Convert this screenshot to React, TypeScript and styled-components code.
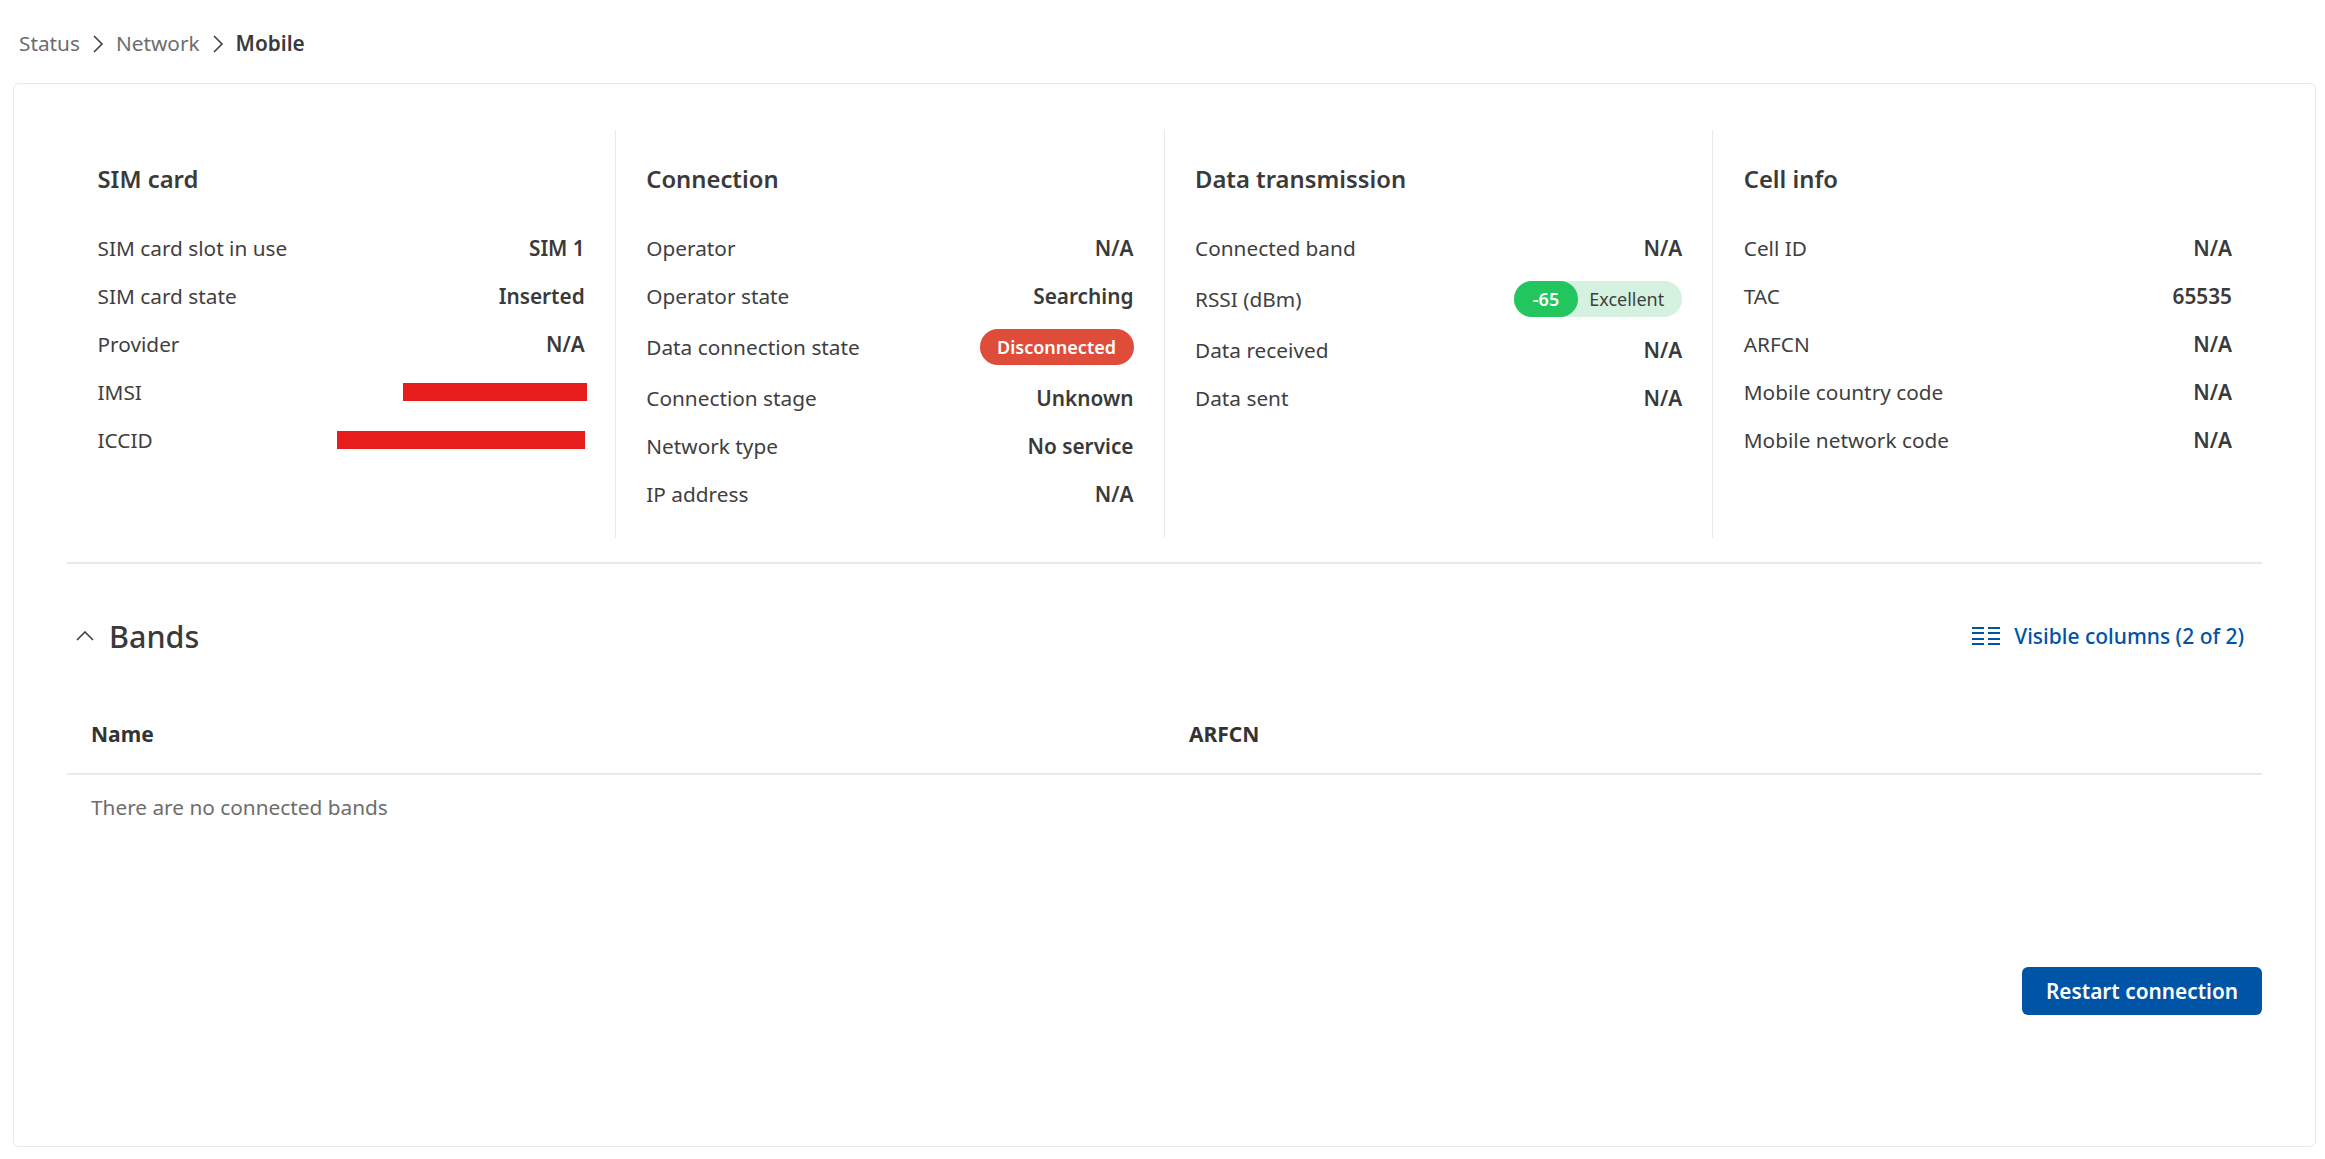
import React from "react";
import styled, { createGlobalStyle } from "styled-components";

const Global = createGlobalStyle`
  html, body { margin: 0; padding: 0; background: #fff; }
  body { font-family: "Noto Sans", "Open Sans", sans-serif; color: #3b3b3b; }
`;

const Page = styled.div`
  width: 2325px;
  height: 1159px;
  box-sizing: border-box;
  padding: 0 9px 12px 13px;
  display: flex;
  flex-direction: column;
  overflow: hidden;
`;

const Crumbs = styled.nav`
  height: 83px;
  box-sizing: border-box;
  padding: 30px 0 0 6px;
  display: flex;
  align-items: flex-start;
  font-size: 20.8px;
  line-height: 27px;
`;

const Crumb = styled.span<{ $current?: boolean }>`
  color: ${(p) => (p.$current ? "#3a3a3a" : "#6d6d6d")};
  font-weight: ${(p) => (p.$current ? 600 : 400)};
`;

const CrumbSep = styled.svg`
  width: 12px;
  height: 18px;
  margin: 5px 12px 0;
  flex: none;
`;

const Card = styled.main`
  flex: 1;
  box-sizing: border-box;
  border: 1px solid #e6e8ea;
  border-radius: 6px;
  padding: 46px 53px 0;
  display: flex;
  flex-direction: column;
`;

const Summary = styled.section`
  display: grid;
  grid-template-columns: repeat(4, 1fr);
  height: 408px;
  margin-bottom: 24px;
`;

const Column = styled.div<{ $last?: boolean }>`
  padding: 34px 30px 0 30.5px;
  border-right: ${(p) => (p.$last ? "none" : "1px solid #e8eaed")};
`;

const ColumnTitle = styled.h3`
  margin: 0 0 30px;
  font-size: 23.8px;
  line-height: 30px;
  font-weight: 600;
  color: #3a3a3a;
`;

const Row = styled.div<{ $tall?: boolean }>`
  display: flex;
  justify-content: space-between;
  align-items: center;
  height: ${(p) => (p.$tall ? 54 : 48)}px;
  font-size: 20.8px;
  line-height: 36px;
`;

const Label = styled.span`
  color: #3f3f3f;
`;

const Value = styled.span`
  font-weight: 600;
  color: #3a3a3a;
`;

const Redaction = styled.span<{ $w: number; $right: number }>`
  display: block;
  width: ${(p) => p.$w}px;
  height: 18px;
  margin-right: ${(p) => p.$right}px;
  background: #e81e1e;
`;

const BadgeDanger = styled.span`
  background: #df4c3a;
  color: #fff;
  font-size: 18px;
  font-weight: 600;
  line-height: 36px;
  height: 36px;
  padding: 0 17.5px;
  border-radius: 18px;
`;

const Signal = styled.span`
  display: flex;
  height: 36px;
  border-radius: 18px;
  background: #d4f2df;
  font-size: 18px;
  line-height: 36px;
  color: #3f3f3f;
`;

const SignalValue = styled.span`
  background: #22c55e;
  color: #fff;
  font-weight: 600;
  border-radius: 18px;
  padding: 0 18.5px;
`;

const SignalText = styled.span`
  padding: 0 18px 0 11.5px;
`;

const Divider = styled.hr`
  margin: 0;
  border: none;
  border-top: 2px solid #e6e9ee;
`;

const BandsHead = styled.div`
  height: 125px;
  box-sizing: border-box;
  padding: 18px 18px 0 9px;
  display: flex;
  align-items: center;
  justify-content: space-between;
`;

const BandsTitle = styled.div`
  display: flex;
  align-items: center;
  gap: 15px;
  font-size: 30.5px;
  font-weight: 500;
  color: #3a3a3a;
`;

const ColumnsToggle = styled.button`
  display: flex;
  align-items: center;
  gap: 14px;
  border: none;
  background: none;
  padding: 0;
  font: 500 21px "Noto Sans", sans-serif;
  color: #0054a6;
`;

const TableHead = styled.div`
  display: grid;
  grid-template-columns: 1098px 1fr;
  height: 86px;
  box-sizing: border-box;
  padding: 6px 24px 0;
  align-items: center;
  border-bottom: 2px solid #e6e9ee;
  font-size: 21px;
  font-weight: 700;
  color: #333;
`;

const Empty = styled.div`
  padding: 19px 24px 18px;
  font-size: 20.8px;
  line-height: 27px;
  color: #6d6d6d;
`;

const Actions = styled.div`
  display: flex;
  justify-content: flex-end;
  margin-top: 128px;
`;

const PrimaryButton = styled.button`
  height: 48px;
  width: 240px;
  border: none;
  border-radius: 6px;
  background: #0054a6;
  color: #fff;
  font: 600 20.8px "Noto Sans", sans-serif;
`;

type Item = { label: string; value?: string; node?: React.ReactNode; tall?: boolean };

const columns: { title: string; rows: Item[] }[] = [
  {
    title: "SIM card",
    rows: [
      { label: "SIM card slot in use", value: "SIM 1" },
      { label: "SIM card state", value: "Inserted" },
      { label: "Provider", value: "N/A" },
      { label: "IMSI", node: <Redaction $w={184} $right={-2} /> },
      { label: "ICCID", node: <Redaction $w={248} $right={0} /> },
    ],
  },
  {
    title: "Connection",
    rows: [
      { label: "Operator", value: "N/A" },
      { label: "Operator state", value: "Searching" },
      { label: "Data connection state", node: <BadgeDanger>Disconnected</BadgeDanger>, tall: true },
      { label: "Connection stage", value: "Unknown" },
      { label: "Network type", value: "No service" },
      { label: "IP address", value: "N/A" },
    ],
  },
  {
    title: "Data transmission",
    rows: [
      { label: "Connected band", value: "N/A" },
      {
        label: "RSSI (dBm)",
        tall: true,
        node: (
          <Signal>
            <SignalValue>-65</SignalValue>
            <SignalText>Excellent</SignalText>
          </Signal>
        ),
      },
      { label: "Data received", value: "N/A" },
      { label: "Data sent", value: "N/A" },
    ],
  },
  {
    title: "Cell info",
    rows: [
      { label: "Cell ID", value: "N/A" },
      { label: "TAC", value: "65535" },
      { label: "ARFCN", value: "N/A" },
      { label: "Mobile country code", value: "N/A" },
      { label: "Mobile network code", value: "N/A" },
    ],
  },
];

const Chevron = () => (
  <CrumbSep viewBox="0 0 12 18" fill="none" stroke="#3f3f3f" strokeWidth="1.6">
    <path d="M2 1l8 8-8 8" />
  </CrumbSep>
);

export default function App() {
  return (
    <Page>
      <Global />
      <Crumbs>
        <Crumb>Status</Crumb>
        <Chevron />
        <Crumb>Network</Crumb>
        <Chevron />
        <Crumb $current>Mobile</Crumb>
      </Crumbs>
      <Card>
        <Summary>
          {columns.map((c, i) => (
            <Column key={c.title} $last={i === columns.length - 1}>
              <ColumnTitle>{c.title}</ColumnTitle>
              {c.rows.map((r) => (
                <Row key={r.label} $tall={r.tall}>
                  <Label>{r.label}</Label>
                  {r.node ?? <Value>{r.value}</Value>}
                </Row>
              ))}
            </Column>
          ))}
        </Summary>
        <Divider />
        <BandsHead>
          <BandsTitle>
            <svg width="18" height="10" viewBox="0 0 18 10" fill="none" stroke="#3f3f3f" strokeWidth="1.6">
              <path d="M1 9l8-8 8 8" />
            </svg>
            Bands
          </BandsTitle>
          <ColumnsToggle>
            <svg width="28" height="18" viewBox="0 0 28 18" fill="#0054a6">
              <path d="M0 0h12v2H0zM0 5h12v2H0zM0 11h12v2H0zM0 16h12v2H0zM16 0h12v2H16zM16 5h12v2H16zM16 11h12v2H16zM16 16h12v2H16z" />
            </svg>
            Visible columns (2 of 2)
          </ColumnsToggle>
        </BandsHead>
        <TableHead>
          <span>Name</span>
          <span>ARFCN</span>
        </TableHead>
        <Empty>There are no connected bands</Empty>
        <Actions>
          <PrimaryButton>Restart connection</PrimaryButton>
        </Actions>
      </Card>
    </Page>
  );
}
